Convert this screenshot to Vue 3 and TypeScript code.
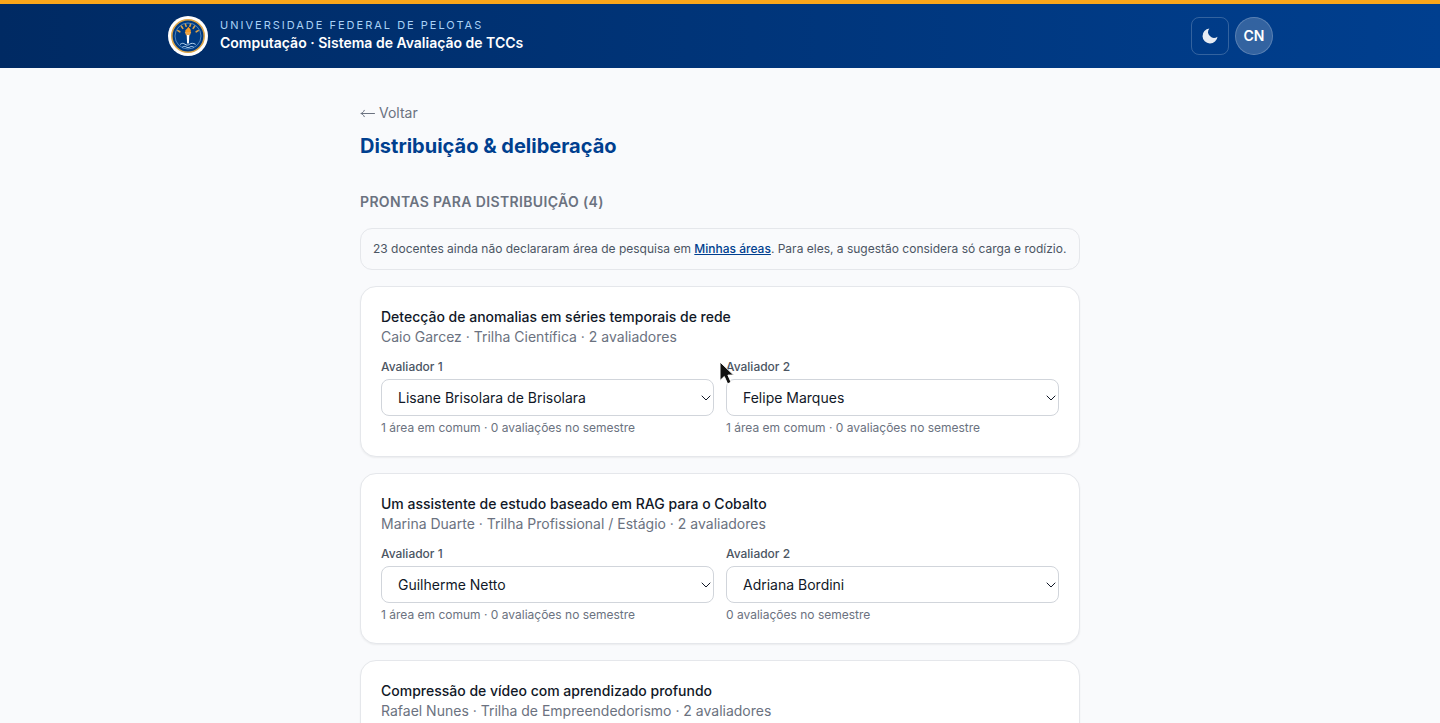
<script setup lang="ts">
import { reactive } from 'vue'

interface Slot {
  chosen: string
  hint: string
}

interface Work {
  id: number
  title: string
  author: string
  track: string
  slots: Slot[]
}

const pendingTeachers = 23

const teachers: string[] = [
  'Lisane Brisolara de Brisolara',
  'Felipe Marques',
  'Guilherme Netto',
  'Adriana Bordini',
]

const works = reactive<Work[]>([
  {
    id: 1,
    title: 'Detecção de anomalias em séries temporais de rede',
    author: 'Caio Garcez',
    track: 'Trilha Científica',
    slots: [
      { chosen: 'Lisane Brisolara de Brisolara', hint: '1 área em comum · 0 avaliações no semestre' },
      { chosen: 'Felipe Marques', hint: '1 área em comum · 0 avaliações no semestre' },
    ],
  },
  {
    id: 2,
    title: 'Um assistente de estudo baseado em RAG para o Cobalto',
    author: 'Marina Duarte',
    track: 'Trilha Profissional / Estágio',
    slots: [
      { chosen: 'Guilherme Netto', hint: '1 área em comum · 0 avaliações no semestre' },
      { chosen: 'Adriana Bordini', hint: '0 avaliações no semestre' },
    ],
  },
  {
    id: 3,
    title: 'Compressão de vídeo com aprendizado profundo',
    author: 'Rafael Nunes',
    track: 'Trilha de Empreendedorismo',
    slots: [
      { chosen: 'Felipe Marques', hint: '0 avaliações no semestre' },
      { chosen: 'Guilherme Netto', hint: '0 avaliações no semestre' },
    ],
  },
])
</script>

<template>
  <div class="page">
    <header class="topbar">
      <div class="topbar-inner">
        <a class="brand" href="#">
          <svg class="seal" viewBox="0 0 40 40" aria-hidden="true">
            <circle cx="20" cy="20" r="20" fill="#fff" />
            <circle cx="20" cy="20" r="16.2" fill="#003a80" stroke="#dda648" stroke-width="1.6" />
            <circle cx="20" cy="20" r="13" fill="none" stroke="#5f97cf" stroke-width="0.8" />
            <g fill="none" stroke="#d9a24a" stroke-width="1.6" stroke-linecap="round">
              <path d="M9.800 14.600l2 1.200M13.400 10.200l1.400 2.200M17.400 8.300l.7 2M22.600 8.300l-.7 2M26.600 10.200l-1.400 2.200M30.200 14.600l-2 1.200" />
            </g>
            <path d="M20.200 10.800c1.800 1.600 2.900 2.900 2.600 4.600-.3 1.400-1.400 2.200-2.800 2.200s-2.600-1-2.800-2.300c-.1-1.300 1.100-1.700 1.800-2.500.6-.6 1-1.200 1.200-2z" fill="#f59a23" />
            <path d="M16.800 16h6.400l-1.200 3.200h-4z" fill="#eba64c" />
            <path d="M18.700 19h2.600l-.4 8.500h-1.800z" fill="#fff" />
            <path d="M12.400 28.200c1.500-1.200 3-1.200 4.500 0s3.300 1.200 4.800 0 3.500-1.200 5.600 0M14.600 31c1.200-.8 2.400-.8 3.600 0s2.600.8 3.800 0 2.200-.7 3.400 0" fill="none" stroke="#b9d7f2" stroke-width="1" stroke-linecap="round" />
          </svg>
          <span class="brand-text">
            <span class="brand-org">Universidade Federal de Pelotas</span>
            <span class="brand-name">Computação · Sistema de Avaliação de TCCs</span>
          </span>
        </a>
        <div class="actions">
          <button class="theme" type="button" aria-label="Alternar tema">
            <svg viewBox="0 0 24 24" aria-hidden="true">
              <path d="M21 12.790A9 9 0 1 1 11.210 3 7 7 0 0 0 21 12.790z" fill="currentColor" />
            </svg>
          </button>
          <button class="avatar" type="button">CN</button>
        </div>
      </div>
    </header>

    <main class="content">
      <a class="back" href="#">
        <svg class="arrow" viewBox="0 0 15 10" aria-hidden="true">
          <path d="M14.500 5.500H1M4.300 2.300C3.600 3.900 2.500 5 1 5.500 2.500 6 3.600 7.100 4.300 8.700" fill="none" stroke="currentColor" stroke-width="1" stroke-linecap="round" stroke-linejoin="round" />
        </svg>
        Voltar
      </a>
      <h1>Distribuição &amp; deliberação</h1>

      <section class="queue">
        <h2>Prontas para distribuição (4)</h2>
        <p class="notice">
          {{ pendingTeachers }} docentes ainda não declararam área de pesquisa em
          <a href="#">Minhas áreas</a>. Para eles, a sugestão considera só carga e rodízio.
        </p>

        <article v-for="work in works" :key="work.id" class="card">
          <h3>{{ work.title }}</h3>
          <p class="meta">{{ work.author }} · {{ work.track }} · {{ work.slots.length }} avaliadores</p>
          <div class="slots">
            <div v-for="(slot, i) in work.slots" :key="i" class="slot">
              <label :for="`av-${work.id}-${i}`">Avaliador {{ i + 1 }}</label>
              <div class="picker">
                <select :id="`av-${work.id}-${i}`" v-model="slot.chosen">
                  <option v-for="name in teachers" :key="name" :value="name">{{ name }}</option>
                </select>
                <svg class="chevron" viewBox="0 0 10 10" aria-hidden="true">
                  <path d="M1 3l4 4 4-4" fill="none" stroke="#111827" stroke-width="1" stroke-linecap="round" stroke-linejoin="round" />
                </svg>
              </div>
              <p class="hint">{{ slot.hint }}</p>
            </div>
          </div>
        </article>
      </section>
    </main>

    <svg class="pointer" viewBox="0 0 16 24" aria-hidden="true">
      <path d="M1 1v18.500l4.300-4 3.300 7.300 3.500-1.500-3.200-7.200h5.800z" fill="#111" stroke="#fff" stroke-width="1" stroke-linejoin="round" />
    </svg>
  </div>
</template>

<style>
body {
  margin: 0;
  background: #f9fafc;
}
html {
  scrollbar-width: none;
}
</style>

<style scoped>
.page {
  min-height: 100vh;
  background: #f9fafc;
  color: #111827;
  font-family: Inter, "Liberation Sans", sans-serif;
  font-size: 14px;
  line-height: 20px;
}
h1, h2, h3, p {
  margin: 0;
}
.topbar {
  border-top: 4px solid #faa61a;
  background: linear-gradient(90deg, #002a63, #003f8f);
}
.topbar-inner {
  display: flex;
  align-items: center;
  justify-content: space-between;
  box-sizing: border-box;
  max-width: 1152px;
  min-height: 64px;
  margin: 0 auto;
  padding: 12px 23px 12px 24px;
}
.brand {
  display: flex;
  align-items: center;
  gap: 12px;
  color: #fff;
  text-decoration: none;
}
.seal {
  width: 40px;
  height: 40px;
}
.brand-text {
  display: flex;
  flex-direction: column;
  padding-bottom: 2px;
}
.brand-org {
  color: #a9d2f7;
  font-size: 11px;
  line-height: 16px;
  letter-spacing: 2px;
  text-transform: uppercase;
}
.brand-name {
  font-weight: 600;
}
.actions {
  display: flex;
  gap: 6px;
}
.theme,
.avatar {
  display: flex;
  align-items: center;
  justify-content: center;
  box-sizing: border-box;
  width: 38px;
  height: 38px;
  padding: 0;
  border: 1px solid rgba(255, 255, 255, 0.2);
  color: #fff;
  font: 600 14px/20px Inter, "Liberation Sans", sans-serif;
}
.theme {
  border-radius: 8px;
  background: transparent;
}
.theme svg {
  width: 20px;
  height: 20px;
  opacity: 0.9;
}
.avatar {
  border-radius: 50%;
  background: rgba(255, 255, 255, 0.2);
}
.content {
  box-sizing: border-box;
  max-width: 768px;
  margin: 0 auto;
  padding: 35px 24px 40px;
}
.back {
  display: flex;
  align-items: center;
  gap: 4px;
  width: fit-content;
  color: #6b7280;
  text-decoration: none;
}
.arrow {
  width: 15px;
  height: 10px;
}
h1 {
  margin-top: 9px;
  color: #003f8f;
  font-size: 20px;
  font-weight: 700;
  line-height: 28px;
}
.queue {
  display: flex;
  flex-direction: column;
  gap: 16px;
  margin-top: 32px;
}
h2 {
  color: #6b7280;
  font-size: 14px;
  font-weight: 600;
  letter-spacing: 0.025em;
  text-transform: uppercase;
}
.notice {
  padding: 12px;
  border: 1px solid #e5e7eb;
  border-radius: 12px;
  color: #4b5563;
  font-size: 12px;
  line-height: 16px;
}
.notice a {
  color: #003f8f;
  font-weight: 500;
}
.card {
  padding: 20px;
  border: 1px solid #e5e7eb;
  border-radius: 16px;
  background: #fff;
  box-shadow: 0 1px 2px rgba(0, 0, 0, 0.06);
}
h3 {
  font-size: 14px;
  font-weight: 500;
}
.meta {
  color: #6b7280;
}
.slots {
  display: grid;
  grid-template-columns: repeat(2, 1fr);
  gap: 12px;
  margin-top: 12px;
}
.slot {
  display: flex;
  flex-direction: column;
  gap: 4px;
  font-size: 12px;
  line-height: 16px;
}
label {
  color: #4b5563;
  font-weight: 500;
}
.picker {
  display: grid;
  align-items: center;
}
.picker > * {
  grid-area: 1 / 1;
}
select {
  appearance: none;
  width: 100%;
  height: 37px;
  padding: 0 24px 0 16px;
  border: 1px solid #d1d5db;
  border-radius: 8px;
  background-color: #fff;
  color: #111827;
  font: 400 14px/20px Inter, "Liberation Sans", sans-serif;
}
.chevron {
  justify-self: end;
  width: 10px;
  height: 10px;
  margin-right: 3px;
  pointer-events: none;
}
.hint {
  color: #6b7280;
}
.pointer {
  position: fixed;
  top: 361px;
  left: 719px;
  width: 16px;
  height: 24px;
  pointer-events: none;
}
</style>
